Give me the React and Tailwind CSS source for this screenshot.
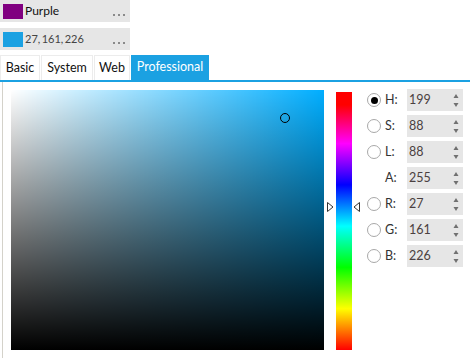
import React from "react";

const font = { fontFamily: '"Segoe UI", Lato, "Noto Sans", sans-serif' };

function Dots() {
  return (
    <div className="ml-auto mr-[5px] flex gap-[3px] items-end h-[10px]">
      <span className="w-[2px] h-[2px] bg-[#8a8a8a]" />
      <span className="w-[2px] h-[2px] bg-[#8a8a8a]" />
      <span className="w-[2px] h-[2px] bg-[#8a8a8a]" />
    </div>
  );
}

function Radio({ checked }) {
  return (
    <div className="w-[14px] h-[14px] rounded-full border border-[#a8a8a8] bg-white flex items-center justify-center">
      {checked && <div className="w-[7px] h-[7px] rounded-full bg-black" />}
    </div>
  );
}

function Row({ label, value, radio, checked }) {
  return (
    <div className="flex items-center h-[22px]">
      <div className="w-[14px] flex items-center">{radio && <Radio checked={checked} />}</div>
      <div className="w-[26px] pl-[4px] text-[12.5px] text-[#333]">{label}</div>
      <div className="w-[56px] h-[22px] bg-[#e6e6e6] flex items-center pl-[2px] text-[12.5px] text-[#4a4040] relative">
        {value}
        <svg className="absolute left-[46px] top-[5px]" width="6" height="13" viewBox="0 0 6 13">
          <path d="M3 0 L5.5 4 L0.5 4 Z" fill="#707070" />
          <path d="M0.5 9 L5.5 9 L3 13 Z" fill="#707070" />
        </svg>
      </div>
    </div>
  );
}

export default function App() {
  return (
    <div className="w-[470px] h-[358px] bg-white overflow-hidden" style={font}>
      <div className="h-[22px] w-[130px] bg-[#e6e6e6] flex items-center">
        <div className="ml-[3px] w-[20px] h-[15px] bg-[#800080]" />
        <span className="ml-[2px] text-[12px] text-[#111]">Purple</span>
        <Dots />
      </div>
      <div className="mt-[6px] h-[22px] w-[130px] bg-[#e6e6e6] flex items-center">
        <div className="ml-[3px] w-[20px] h-[15px] bg-[#1ba1e2]" />
        <span className="ml-[2px] text-[11px] text-[#444]">27,{"\u2009"}161,{"\u2009"}226</span>
        <Dots />
      </div>
      <div className="mt-[5px] flex h-[25px] text-[12.5px]">
        <div className="w-[40px] border border-b-0 border-[#ececec] bg-white flex items-center justify-center text-[#111]">Basic</div>
        <div className="ml-[1px] w-[52px] border border-b-0 border-[#ececec] bg-white flex items-center justify-center text-[#111]">System</div>
        <div className="ml-[1px] w-[36px] border border-b-0 border-[#ececec] bg-white flex items-center justify-center text-[#111]">Web</div>
        <div className="ml-[1px] w-[78px] bg-[#1ba1e2] flex items-center justify-center text-white">Professional</div>
      </div>
      <div className="h-[2px] bg-[#1ba1e2]" />
      <div className="flex h-[276px] ml-[2px] border-l border-[#d4d2ca]">
        <div className="ml-[8px] mt-[8px] w-[313px] h-[260px] relative"
          style={{ background: "linear-gradient(to bottom, rgba(0,0,0,0), #000), linear-gradient(to right, #fff, rgba(255,255,255,0)), #00aeff" }}>
          <div className="absolute left-[269px] top-[23px] w-[10px] h-[10px] rounded-full border-[1.5px] border-black" />
        </div>
        <div className="ml-[12px] mt-[10px] w-[16px] h-[258px] relative"
          style={{ background: "linear-gradient(to bottom, #ff0000 0%, #ff0000 5%, #ff00ff 20%, #0000ff 36%, #00ffff 52%, #00ff00 68%, #ffff00 84%, #ff0000 100%)" }}>
          <svg className="absolute left-[-9px] top-[110px]" width="7" height="10" viewBox="0 0 7 10">
            <path d="M0.5 0.5 L6 5 L0.5 9.5 Z" fill="white" stroke="#333" strokeWidth="1" />
          </svg>
          <svg className="absolute left-[17px] top-[110px]" width="7" height="10" viewBox="0 0 7 10">
            <path d="M6.5 0.5 L1 5 L6.5 9.5 Z" fill="white" stroke="#333" strokeWidth="1" />
          </svg>
        </div>
        <div className="ml-[15px] mt-[7px] flex flex-col gap-[4px]">
          <Row radio checked label="H:" value="199" />
          <Row radio label="S:" value="88" />
          <Row radio label="L:" value="88" />
          <Row label="A:" value="255" />
          <Row radio label="R:" value="27" />
          <Row radio label="G:" value="161" />
          <Row radio label="B:" value="226" />
        </div>
      </div>
    </div>
  );
}
